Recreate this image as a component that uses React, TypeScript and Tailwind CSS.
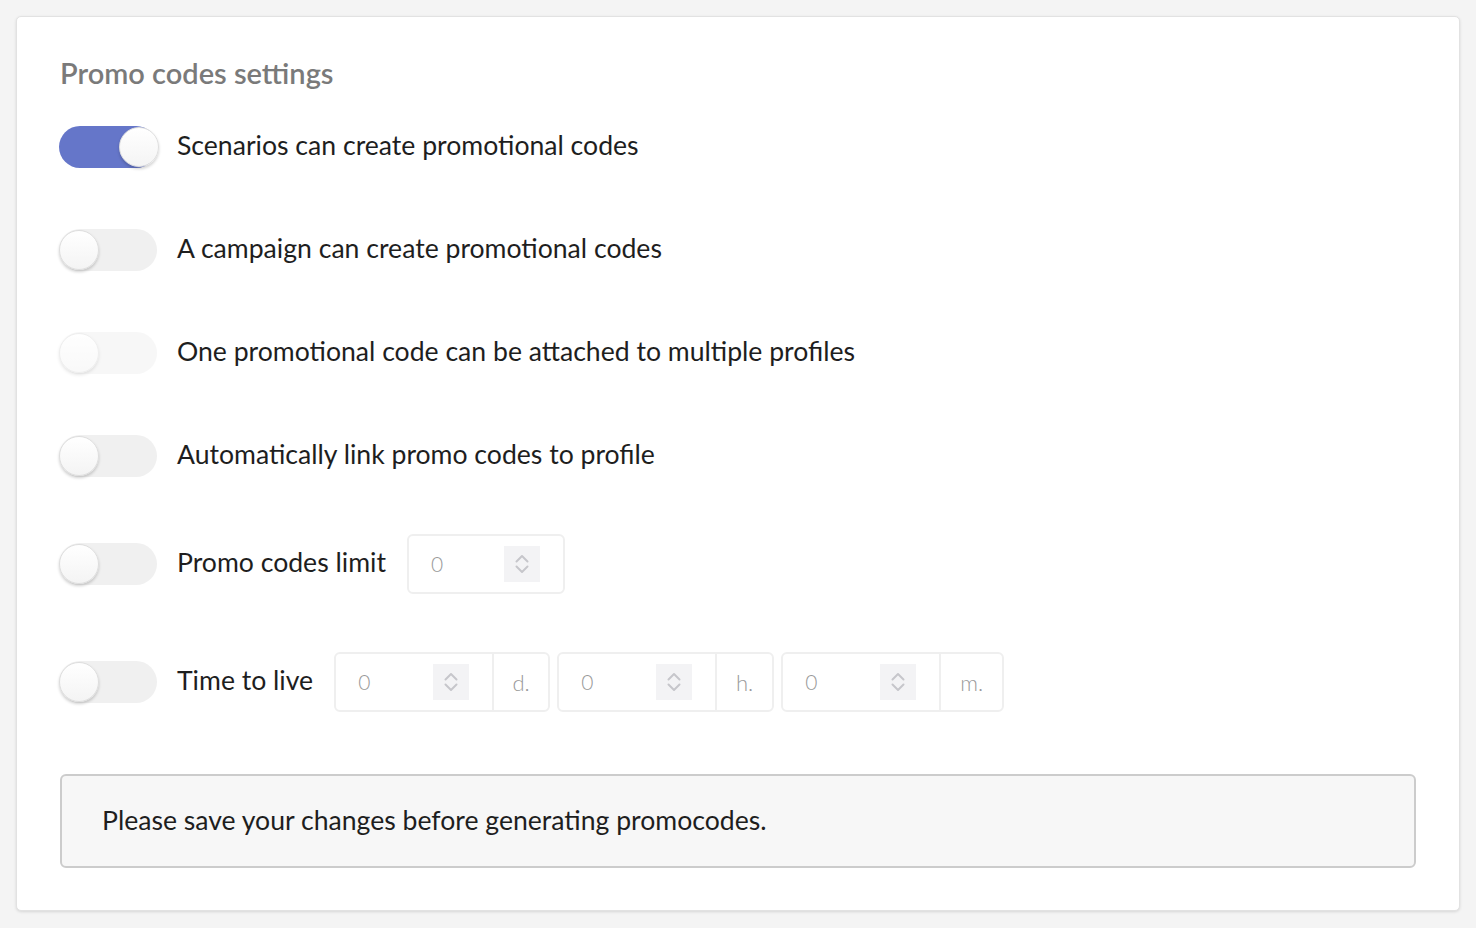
import React from "react";

function Toggle({ on = false, disabled = false }: { on?: boolean; disabled?: boolean }) {
  return (
    <div
      className={`relative h-[42px] w-[98px] shrink-0 rounded-full ${on ? "bg-[#6576c9]" : "bg-[#f0f0f0]"} ${
        disabled ? "opacity-50" : ""
      }`}
    >
      <div
        className={`absolute top-[1px] h-[40px] w-[40px] rounded-full border border-[#dedede] bg-gradient-to-b from-white to-[#f4f4f4] shadow-[0_2px_3px_rgba(0,0,0,0.18)] ${
          on ? "left-[60px]" : "left-0"
        }`}
      />
    </div>
  );
}

function Spinner() {
  return (
    <div className="flex h-[36px] w-[36px] flex-col items-center justify-center gap-[2px] bg-[#f3f3f5]">
      <svg width="14" height="9" viewBox="0 0 14 9" fill="none">
        <path d="M1.5 7.5 7 2l5.5 5.5" stroke="#c6c6cb" strokeWidth="2" strokeLinecap="round" strokeLinejoin="round" />
      </svg>
      <svg width="14" height="9" viewBox="0 0 14 9" fill="none">
        <path d="M1.5 1.5 7 7l5.5-5.5" stroke="#c6c6cb" strokeWidth="2" strokeLinecap="round" strokeLinejoin="round" />
      </svg>
    </div>
  );
}

function NumberBox({ className = "" }: { className?: string }) {
  return (
    <div className={`flex h-full items-center justify-between pl-[22px] pr-[23px] ${className}`}>
      <span className="text-[21px] font-light text-[#9a9a9a]">0</span>
      <Spinner />
    </div>
  );
}

function TimeField({ unit, w }: { unit: string; w: string }) {
  return (
    <div className={`flex h-[60px] rounded-[6px] border-2 border-[#efefef] bg-white ${w}`}>
      <NumberBox className="w-[158px] shrink-0 border-r-2 border-[#efefef]" />
      <div className="flex flex-1 items-center justify-center text-[22px] font-light text-[#9a9a9a]">{unit}</div>
    </div>
  );
}

function Label({ children }: { children: React.ReactNode }) {
  return <span className="ml-[20px] pb-[4px] text-[26.6px] leading-none text-[#1e1e1e]">{children}</span>;
}

function Row({ on, disabled, label }: { on?: boolean; disabled?: boolean; label: string }) {
  return (
    <div className="flex h-[42px] items-center">
      <Toggle on={on} disabled={disabled} />
      <Label>{label}</Label>
    </div>
  );
}

export default function App() {
  return (
    <div className="min-h-screen bg-[#f4f4f4] p-[16px]" style={{ fontFamily: "Lato, 'Noto Sans', sans-serif" }}>
      <div className="flex flex-col rounded-[5px] border border-[#e2e2e2] bg-white pb-[42px] pl-[42px] pr-[43px] pt-[39px] shadow-[0_1px_3px_rgba(0,0,0,0.12)]">
        <h2 className="h-[36px] pl-[1px] text-[29px] font-semibold leading-[34px] text-[#7a7a7a]">Promo codes settings</h2>

        <div className="mt-[34px] flex flex-col gap-[61px]">
          <Row on label="Scenarios can create promotional codes" />
          <Row label="A campaign can create promotional codes" />
          <Row disabled label="One promotional code can be attached to multiple profiles" />
          <Row label="Automatically link promo codes to profile" />
        </div>

        <div className="mt-[57px] flex h-[60px] items-center">
          <Toggle />
          <Label>Promo codes limit</Label>
          <div className="ml-[21px] h-[60px] w-[158px] rounded-[6px] border-2 border-[#efefef] bg-white">
            <NumberBox />
          </div>
        </div>

        <div className="mt-[58px] flex h-[60px] items-center">
          <Toggle />
          <Label>Time to live</Label>
          <div className="ml-[21px] flex gap-[7px]">
            <TimeField unit="d." w="w-[216px]" />
            <TimeField unit="h." w="w-[217px]" />
            <TimeField unit="m." w="w-[223px]" />
          </div>
        </div>

        <div className="ml-[1px] mt-[62px] flex h-[94px] items-center rounded-[6px] border-2 border-[#cccccc] bg-[#f7f7f7] px-[40px]">
          <span className="pb-[2px] text-[26.6px] leading-none text-[#1e1e1e]">
            Please save your changes before generating promocodes.
          </span>
        </div>
      </div>
    </div>
  );
}
